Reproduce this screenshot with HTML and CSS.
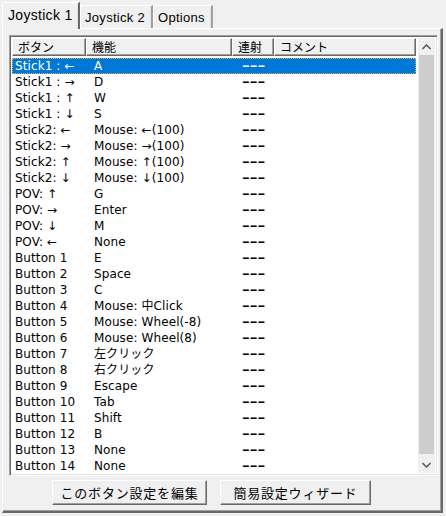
FILE: index.html
```html
<!DOCTYPE html>
<html>
<head>
<meta charset="utf-8">
<link rel="stylesheet" href="styles.css">
</head>
<body>
<div class="window">
  <div class="tabs">
    <div class="tab active">Joystick 1</div>
    <div class="tab">Joystick 2</div>
    <div class="tab">Options</div>
  </div>
  <div class="panel">
    <div class="list">
      <div class="table">
        <div class="header">
          <div class="hcell">ボタン</div>
          <div class="hcell">機能</div>
          <div class="hcell">連射</div>
          <div class="hcell">コメント</div>
        </div>
        <div class="rows">
          <div class="row selected"><span>Stick1 : ←</span><span>A</span><span class="dash">---</span><span></span></div>
          <div class="row"><span>Stick1 : →</span><span>D</span><span class="dash">---</span><span></span></div>
          <div class="row"><span>Stick1 : ↑</span><span>W</span><span class="dash">---</span><span></span></div>
          <div class="row"><span>Stick1 : ↓</span><span>S</span><span class="dash">---</span><span></span></div>
          <div class="row"><span>Stick2: ←</span><span>Mouse: ←(100)</span><span class="dash">---</span><span></span></div>
          <div class="row"><span>Stick2: →</span><span>Mouse: →(100)</span><span class="dash">---</span><span></span></div>
          <div class="row"><span>Stick2: ↑</span><span>Mouse: ↑(100)</span><span class="dash">---</span><span></span></div>
          <div class="row"><span>Stick2: ↓</span><span>Mouse: ↓(100)</span><span class="dash">---</span><span></span></div>
          <div class="row"><span>POV: ↑</span><span>G</span><span class="dash">---</span><span></span></div>
          <div class="row"><span>POV: →</span><span>Enter</span><span class="dash">---</span><span></span></div>
          <div class="row"><span>POV: ↓</span><span>M</span><span class="dash">---</span><span></span></div>
          <div class="row"><span>POV: ←</span><span>None</span><span class="dash">---</span><span></span></div>
          <div class="row"><span>Button 1</span><span>E</span><span class="dash">---</span><span></span></div>
          <div class="row"><span>Button 2</span><span>Space</span><span class="dash">---</span><span></span></div>
          <div class="row"><span>Button 3</span><span>C</span><span class="dash">---</span><span></span></div>
          <div class="row"><span>Button 4</span><span>Mouse: 中Click</span><span class="dash">---</span><span></span></div>
          <div class="row"><span>Button 5</span><span>Mouse: Wheel(-8)</span><span class="dash">---</span><span></span></div>
          <div class="row"><span>Button 6</span><span>Mouse: Wheel(8)</span><span class="dash">---</span><span></span></div>
          <div class="row"><span>Button 7</span><span>左クリック</span><span class="dash">---</span><span></span></div>
          <div class="row"><span>Button 8</span><span>右クリック</span><span class="dash">---</span><span></span></div>
          <div class="row"><span>Button 9</span><span>Escape</span><span class="dash">---</span><span></span></div>
          <div class="row"><span>Button 10</span><span>Tab</span><span class="dash">---</span><span></span></div>
          <div class="row"><span>Button 11</span><span>Shift</span><span class="dash">---</span><span></span></div>
          <div class="row"><span>Button 12</span><span>B</span><span class="dash">---</span><span></span></div>
          <div class="row"><span>Button 13</span><span>None</span><span class="dash">---</span><span></span></div>
          <div class="row"><span>Button 14</span><span>None</span><span class="dash">---</span><span></span></div>
        </div>
      </div>
      <div class="scrollbar">
        <div class="arrow">
          <svg width="9" height="6" viewBox="0 0 9 6"><path d="M0.5 5 L4.5 1 L8.5 5" fill="none" stroke="#606060" stroke-width="1.6"/></svg>
        </div>
        <div class="track"><div class="thumb"></div></div>
        <div class="arrow">
          <svg width="9" height="6" viewBox="0 0 9 6"><path d="M0.5 1 L4.5 5 L8.5 1" fill="none" stroke="#606060" stroke-width="1.6"/></svg>
        </div>
      </div>
    </div>
    <div class="buttons">
      <div class="btn b1">このボタン設定を編集</div>
      <div class="btn b2">簡易設定ウィザード</div>
    </div>
  </div>
</div>
</body>
</html>
```

FILE: styles.css
```css
html, body {
  margin: 0;
  padding: 0;
  background: #f0f0f0;
}
body {
  width: 446px;
  height: 516px;
  overflow: hidden;
  font-family: "Liberation Sans", "Noto Sans CJK JP", sans-serif;
  font-size: 12px;
  color: #000;
}
.window {
  padding: 2px 3px 3px 2px;
}
.tabs {
  display: flex;
  align-items: flex-end;
  height: 26px;
  position: relative;
  z-index: 2;
}
.tab {
  box-sizing: border-box;
  height: 23px;
  padding: 3px 4px 0 4px;
  font-family: "Liberation Sans", sans-serif;
  font-size: 13px;
  line-height: 17px;
  background: #f0f0f0;
  border-top: 1px solid #fff;
  border-left: 1px solid #fff;
  border-right: 2px solid #a0a0a0;
  box-shadow: inset -1px 0 0 #e3e3e3;
  letter-spacing: 0.3px;
}
.tab.active {
  width: 78px;
  height: 27px;
  padding: 4px 4px 0 5px;
  margin-bottom: -1px;
  font-size: 14px;
  border-right: 2px solid #696969;
}
.tab:nth-child(2) { width: 73px; }
.tab:nth-child(3) { width: 60px; }
.panel {
  box-sizing: border-box;
  height: 485px;
  border-top: 1px solid #fff;
  border-left: 1px solid #fff;
  border-right: 2px solid #696969;
  border-bottom: 2px solid #696969;
  box-shadow: inset -1px -1px 0 #a0a0a0;
  padding: 6px 5px 0 6px;
  display: flex;
  flex-direction: column;
}
.list {
  box-sizing: border-box;
  height: 441px;
  width: 429px;
  border-top: 1px solid #a0a0a0;
  border-left: 1px solid #a0a0a0;
  border-right: 1px solid #fff;
  border-bottom: 1px solid #fff;
  box-shadow: inset 1px 1px 0 #696969, inset -1px -1px 0 #e3e3e3;
  padding: 2px 2px 2px 2px;
  background: #fff;
  display: flex;
}
.table {
  flex: 1;
  overflow: hidden;
}
.header {
  display: grid;
  grid-template-columns: 74px 146px 42px 1fr;
  height: 18px;
}
.hcell {
  box-sizing: border-box;
  background: #f0f0f0;
  border-top: 1px solid #fff;
  border-left: 1px solid #fff;
  border-right: 1px solid #696969;
  border-bottom: 1px solid #696969;
  box-shadow: inset -1px -1px 0 #a0a0a0;
  padding-left: 5px;
  line-height: 16px;
  font-family: "Noto Sans CJK JP", sans-serif;
  font-size: 12px;
}
.rows {
  padding-top: 2px;
}
.row {
  display: grid;
  grid-template-columns: 79px 148px 42px 1fr;
  height: 16px;
  line-height: 16px;
  padding-left: 3px;
  white-space: nowrap;
  font-family: "DejaVu Sans", "Noto Sans CJK JP", sans-serif;
  font-size: 12px;
  letter-spacing: 0.1px;
}
.row.selected {
  background: #0078d7;
  color: #fff;
  outline: 1px dotted #f7a34a;
  outline-offset: -1px;
}
.dash {
  display: inline-block;
  font-family: "Liberation Sans", sans-serif;
  font-weight: bold;
  letter-spacing: 0;
  transform: scaleX(1.95);
  transform-origin: left center;
  font-size: 12px;
}
.scrollbar {
  width: 17px;
  display: flex;
  flex-direction: column;
  background: #f0f0f0;
  margin-left: 2px;
}
.arrow {
  height: 17px;
  display: flex;
  align-items: center;
  justify-content: center;
}
.track {
  flex: 1;
  display: flex;
  padding: 0 0 0 1px;
}
.thumb {
  flex: 1;
  background: #cdcdcd;
  margin-bottom: 2px;
  margin-right: 1px;
}
.buttons {
  display: flex;
  height: 33px;
  align-items: center;
  padding-left: 43px;
  gap: 13px;
}
.btn {
  box-sizing: border-box;
  height: 25px;
  border-top: 1px solid #fff;
  border-left: 1px solid #fff;
  border-right: 1px solid #696969;
  border-bottom: 1px solid #696969;
  box-shadow: inset -1px -1px 0 #a0a0a0;
  background: #f0f0f0;
  font-family: "Noto Sans CJK JP", sans-serif;
  font-size: 13px;
  letter-spacing: 0.8px;
  display: flex;
  align-items: center;
  justify-content: center;
}
.b1 { width: 155px; }
.b2 { width: 151px; }
```
